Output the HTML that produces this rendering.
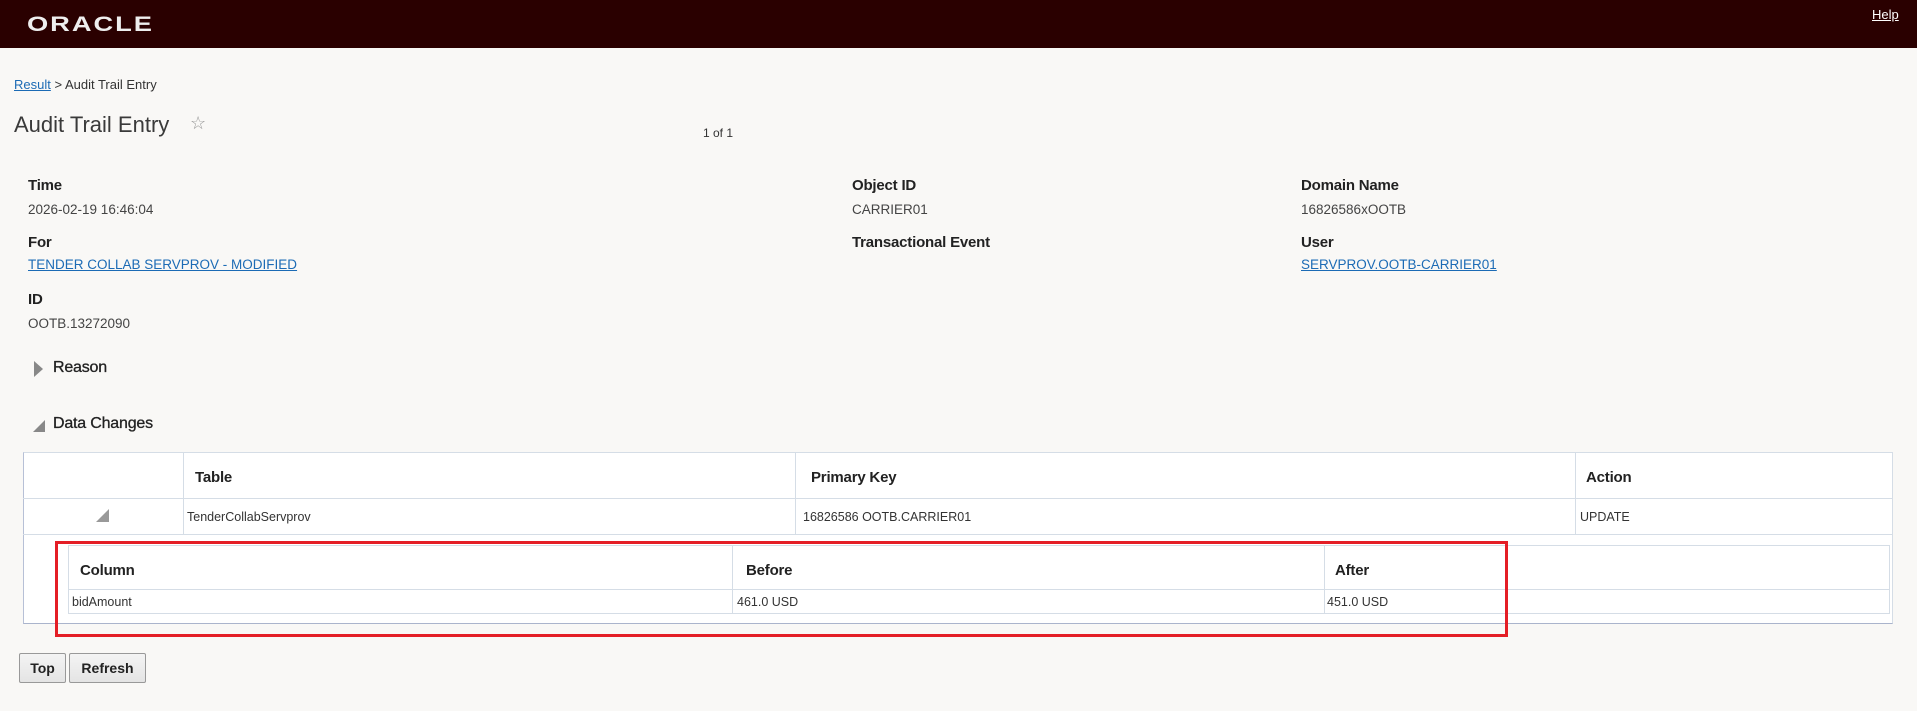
<!DOCTYPE html>
<html><head><meta charset="utf-8"><style>
*{margin:0;padding:0;box-sizing:border-box}
body{width:1917px;height:711px;background:#f9f8f6;font-family:"Liberation Sans",sans-serif;color:#333;position:relative;overflow:hidden}
.a{position:absolute;white-space:nowrap}
.hdr{position:absolute;left:0;top:0;width:1917px;height:48px;background:#2a0000}
.lbl{font-size:15px;font-weight:bold;color:#222;letter-spacing:-0.2px}
.val{font-size:13.5px;color:#444}
.lnk{font-size:13.5px;color:#1c6bb5;text-decoration:underline}
.tb{position:absolute;background:#fff;border:1px solid #d5dde6}
.cell{position:absolute;font-size:12.5px;color:#333}
.th{position:absolute;font-size:15px;font-weight:bold;color:#222;letter-spacing:-0.2px}
.vl{position:absolute;width:1px;background:#d5dde6}
.hl{position:absolute;height:1px;background:#d5dde6}
.btn{position:absolute;top:653px;height:30px;border:1px solid #999;border-radius:2px;background:linear-gradient(#f4f4f4,#e4e4e4);font-size:14px;font-weight:bold;color:#222;text-align:center;line-height:28px}
</style></head><body>
<div class="hdr"></div>
<div class="a" style="left:27px;top:13px;font-size:21px;color:#eee;letter-spacing:1.5px;transform:scaleX(1.3);transform-origin:left;font-weight:bold">ORACLE</div>
<div class="a" style="left:1872px;top:7px;font-size:13px;color:#fff;text-decoration:underline">Help</div>

<div class="a" style="left:14px;top:77px;font-size:13px;color:#333"><span style="color:#1c6bb5;text-decoration:underline">Result</span> &gt; Audit Trail Entry</div>
<div class="a" style="left:14px;top:112px;font-size:22px;color:#3a3a3a">Audit Trail Entry</div>
<div class="a" style="left:190px;top:113px;font-size:18px;color:#999">☆</div>
<div class="a" style="left:703px;top:126px;font-size:12px;color:#333">1 of 1</div>

<div class="a lbl" style="left:28px;top:177px">Time</div>
<div class="a val" style="left:28px;top:202px">2026-02-19 16:46:04</div>
<div class="a lbl" style="left:28px;top:234px">For</div>
<div class="a lnk" style="left:28px;top:257px">TENDER COLLAB SERVPROV - MODIFIED</div>
<div class="a lbl" style="left:28px;top:291px">ID</div>
<div class="a val" style="left:28px;top:316px">OOTB.13272090</div>

<div class="a lbl" style="left:852px;top:177px">Object ID</div>
<div class="a val" style="left:852px;top:202px">CARRIER01</div>
<div class="a lbl" style="left:852px;top:234px">Transactional Event</div>

<div class="a lbl" style="left:1301px;top:177px">Domain Name</div>
<div class="a val" style="left:1301px;top:202px">16826586xOOTB</div>
<div class="a lbl" style="left:1301px;top:234px">User</div>
<div class="a lnk" style="left:1301px;top:257px">SERVPROV.OOTB-CARRIER01</div>

<div class="a" style="left:34px;top:361px;width:0;height:0;border-top:8px solid transparent;border-bottom:8px solid transparent;border-left:9px solid #888"></div>
<div class="a lbl" style="left:53px;top:359px;font-size:16px;font-weight:normal;color:#222;-webkit-text-stroke:0.3px #222">Reason</div>
<div class="a" style="left:33px;top:420px;width:0;height:0;border-left:12px solid transparent;border-bottom:12px solid #888"></div>
<div class="a lbl" style="left:53px;top:415px;font-size:16px;font-weight:normal;color:#222;-webkit-text-stroke:0.3px #222">Data Changes</div>

<div class="tb" style="left:23px;top:452px;width:1870px;height:172px;border-color:#d5dde6 #d5dde6 #aab4cc #b7c0d6"></div>
<div class="hl" style="left:23px;top:498px;width:1870px"></div>
<div class="hl" style="left:23px;top:534px;width:1870px"></div>
<div class="vl" style="left:183px;top:452px;height:83px"></div>
<div class="vl" style="left:795px;top:452px;height:83px"></div>
<div class="vl" style="left:1575px;top:452px;height:83px"></div>
<div class="th" style="left:195px;top:469px">Table</div>
<div class="th" style="left:811px;top:469px">Primary Key</div>
<div class="th" style="left:1586px;top:469px">Action</div>
<div class="a" style="left:96px;top:509px;width:0;height:0;border-left:13px solid transparent;border-bottom:13px solid #999"></div>
<div class="cell" style="left:187px;top:510px">TenderCollabServprov</div>
<div class="cell" style="left:803px;top:510px">16826586 OOTB.CARRIER01</div>
<div class="cell" style="left:1580px;top:510px">UPDATE</div>

<div class="tb" style="left:68px;top:545px;width:1822px;height:69px"></div>
<div class="hl" style="left:68px;top:589px;width:1822px"></div>
<div class="vl" style="left:732px;top:545px;height:69px"></div>
<div class="vl" style="left:1324px;top:545px;height:69px"></div>
<div class="th" style="left:80px;top:562px">Column</div>
<div class="th" style="left:746px;top:562px">Before</div>
<div class="th" style="left:1335px;top:562px">After</div>
<div class="cell" style="left:72px;top:595px">bidAmount</div>
<div class="cell" style="left:737px;top:595px">461.0 USD</div>
<div class="cell" style="left:1327px;top:595px">451.0 USD</div>

<div class="a" style="left:55px;top:541px;width:1453px;height:96px;border:3px solid #e41e26"></div>

<div class="btn" style="left:19px;width:47px">Top</div>
<div class="btn" style="left:69px;width:77px">Refresh</div>
</body></html>
